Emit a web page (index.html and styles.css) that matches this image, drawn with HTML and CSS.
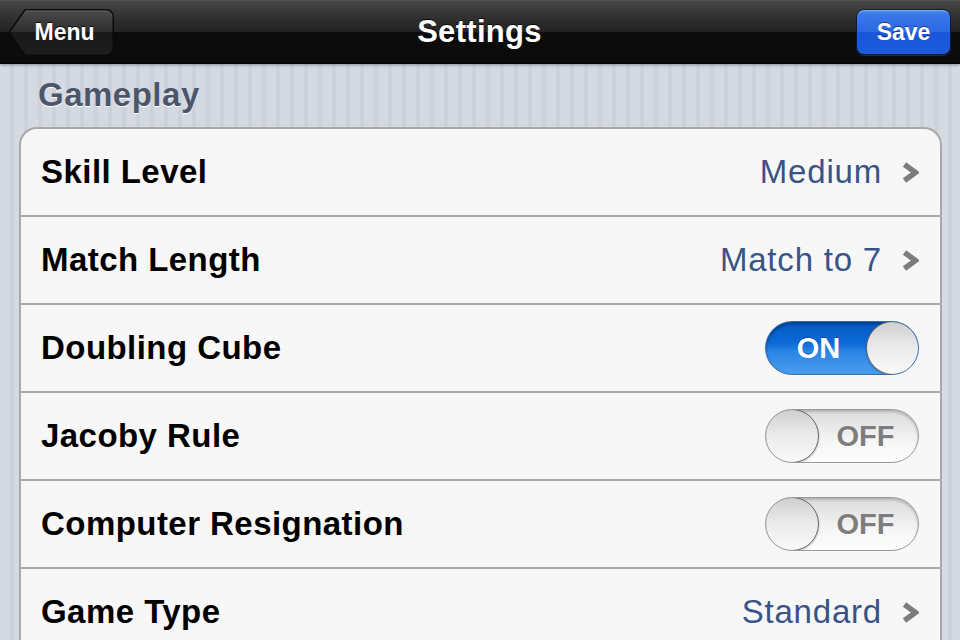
FILE: index.html
```html
<!DOCTYPE html>
<html lang="en">
<head>
<meta charset="utf-8">
<title>Settings</title>
<link rel="stylesheet" href="styles.css">
</head>
<body>
<div class="screen">
  <header class="navbar">
    <div class="nav-left">
      <button class="btn-back">
        <svg class="btn-bg" viewBox="0 0 106 47" preserveAspectRatio="none" aria-hidden="true">
          <defs>
            <linearGradient id="bk" x1="0" y1="0" x2="0" y2="1">
              <stop offset="0" stop-color="#4c4c4c"/>
              <stop offset="0.5" stop-color="#2c2c2c"/>
              <stop offset="0.5" stop-color="#181818"/>
              <stop offset="1" stop-color="#1e1e1e"/>
            </linearGradient>
          </defs>
          <path d="M17 0.75 H98 a7.25 7.25 0 0 1 7.25 7.25 V39 a7.25 7.25 0 0 1 -7.25 7.25 H17 L1 23.5 Z" fill="url(#bk)" stroke="#0a0a0a" stroke-width="1.5"/>
          <path d="M17.5 2 H98 a6 6 0 0 1 6 6" fill="none" stroke="#5c5c5c" stroke-width="1"/>
        </svg>
        <span class="btn-text">Menu</span>
      </button>
    </div>
    <h1 class="nav-title">Settings</h1>
    <div class="nav-right">
      <button class="btn-save">Save</button>
    </div>
  </header>

  <main class="content">
    <h2 class="section-title">Gameplay</h2>
    <div class="group">
      <div class="row">
        <span class="row-label">Skill Level</span>
        <span class="row-value">Medium</span>
        <svg class="chev" width="17" height="21" viewBox="0 0 17 21" aria-hidden="true"><path d="M2.5 2.5 L13.5 10.5 L2.5 18.5" fill="none" stroke="#7c7c7c" stroke-width="5.5" stroke-linejoin="miter"/></svg>
      </div>
      <div class="row">
        <span class="row-label">Match Length</span>
        <span class="row-value">Match to 7</span>
        <svg class="chev" width="17" height="21" viewBox="0 0 17 21" aria-hidden="true"><path d="M2.5 2.5 L13.5 10.5 L2.5 18.5" fill="none" stroke="#7c7c7c" stroke-width="5.5" stroke-linejoin="miter"/></svg>
      </div>
      <div class="row">
        <span class="row-label">Doubling Cube</span>
        <div class="switch on"><span class="sw-text">ON</span><span class="knob"></span></div>
      </div>
      <div class="row">
        <span class="row-label">Jacoby Rule</span>
        <div class="switch off"><span class="knob"></span><span class="sw-text">OFF</span></div>
      </div>
      <div class="row">
        <span class="row-label">Computer Resignation</span>
        <div class="switch off"><span class="knob"></span><span class="sw-text">OFF</span></div>
      </div>
      <div class="row">
        <span class="row-label">Game Type</span>
        <span class="row-value">Standard</span>
        <svg class="chev" width="17" height="21" viewBox="0 0 17 21" aria-hidden="true"><path d="M2.5 2.5 L13.5 10.5 L2.5 18.5" fill="none" stroke="#7c7c7c" stroke-width="5.5" stroke-linejoin="miter"/></svg>
      </div>
    </div>
  </main>
</div>
</body>
</html>
```

FILE: styles.css
```css
* { box-sizing: border-box; }
html, body { margin: 0; padding: 0; }
body {
  width: 960px;
  height: 640px;
  overflow: hidden;
  font-family: "Liberation Sans", Arial, sans-serif;
  background: repeating-linear-gradient(90deg, #d4d9e2 0 10px, #ccd2dc 10px 14px);
}
.screen { width: 960px; height: 640px; display: flex; flex-direction: column; }

.navbar {
  height: 64px;
  flex: none;
  display: grid;
  grid-template-columns: 1fr auto 1fr;
  align-items: center;
  padding: 0 9px 0 8px;
  background: linear-gradient(#5e5e5e 0, #474747 1px, #323232 16px, #222 32px, #0c0c0c 32px, #0b0b0b 62px, #000 64px);
  box-shadow: 0 1px 3px rgba(0,0,0,0.35);
  position: relative;
  z-index: 1;
}
.nav-left { display: flex; justify-content: flex-start; }
.nav-right { display: flex; justify-content: flex-end; }

.btn-back {
  position: relative;
  width: 106px;
  height: 47px;
  border: 0;
  padding: 0 0 0 7px;
  background: transparent;
  display: flex;
  align-items: center;
  justify-content: center;
  font: bold 23px "Liberation Sans", Arial, sans-serif;
  color: #fff;
}
.btn-bg { position: absolute; left: 0; top: 0; width: 106px; height: 47px; }
.btn-text { position: relative; text-shadow: 0 -1px 0 rgba(0,0,0,0.8); }

.nav-title {
  margin: 0;
  font: bold 31px "Liberation Sans", Arial, sans-serif;
  letter-spacing: 0.3px;
  color: #fff;
  text-shadow: 0 -1px 0 rgba(0,0,0,0.8);
}

.btn-save {
  width: 95px;
  height: 46px;
  border-radius: 8px;
  border: 1.5px solid #0d1a33;
  background: linear-gradient(#5a93f0 0, #3a78ea 4px, #2b68e2 50%, #1a56d8 50%, #1c5bdc 100%);
  box-shadow: inset 0 1px 0 rgba(255,255,255,0.25), 0 1px 0 rgba(255,255,255,0.12);
  font: bold 23px "Liberation Sans", Arial, sans-serif;
  color: #fff;
  text-shadow: 0 -1px 0 rgba(0,0,0,0.45);
  padding: 0;
}

.content { padding: 12px 19px 0 19px; flex: 1; }
.section-title {
  margin: 0 0 13px 19px;
  font: bold 33px "Liberation Sans", Arial, sans-serif;
  letter-spacing: 0.5px;
  line-height: 38px;
  color: #4c566b;
  text-shadow: 0 1px 0 #fff;
}

.group {
  background: #f7f7f7;
  border: 2px solid #a9a9a9;
  border-radius: 18px;
  width: 923px;
}
.row {
  height: 88px;
  display: flex;
  align-items: center;
  padding: 0 21px 0 20px;
  border-top: 2px solid #ababab;
}
.row:first-child { border-top: 0; height: 86px; }
.row-label {
  flex: 1;
  font: bold 33px "Liberation Sans", Arial, sans-serif;
  letter-spacing: 0.45px;
  color: #000;
}
.row-value {
  font: 33px "Liberation Sans", Arial, sans-serif;
  letter-spacing: 0.8px;
  color: #385487;
  margin-right: 20px;
}
.chev { width: 17px; height: 21px; flex: none; display: block; }

.switch {
  width: 154px;
  height: 54px;
  border-radius: 27px;
  display: flex;
  align-items: center;
  flex: none;
  position: relative;
  overflow: hidden;
}
.switch.on {
  background: linear-gradient(#0458c2 0, #0c6ad6 40%, #2b86e6 58%, #4c9cee 100%);
  border: 1.5px solid #3d6ea8;
  box-shadow: inset 0 2px 3px rgba(0,0,0,0.35);
}
.switch.off {
  background: linear-gradient(#dcdcdc 0, #ececec 40%, #f6f6f6 60%, #fdfdfd 100%);
  border: 1.5px solid #9a9a9a;
  box-shadow: inset 0 2px 3px rgba(0,0,0,0.2);
}
.sw-text {
  flex: 1;
  text-align: center;
  font: bold 29px "Liberation Sans", Arial, sans-serif;
}
.switch.on .sw-text { color: #fff; text-shadow: 0 -1px 0 rgba(0,0,0,0.3); padding-left: 4px; }
.switch.off .sw-text { color: #7d7d7d; text-shadow: 0 1px 0 #fff; padding-right: 4px; }
.knob {
  width: 54px;
  height: 54px;
  margin: -1.5px;
  flex: none;
  border-radius: 50%;
  background: linear-gradient(#cfcfcf 0, #e9e9e9 45%, #fafafa 100%);
  border: 1.5px solid #666;
  box-shadow: 0 1px 2px rgba(0,0,0,0.3);
}
```
